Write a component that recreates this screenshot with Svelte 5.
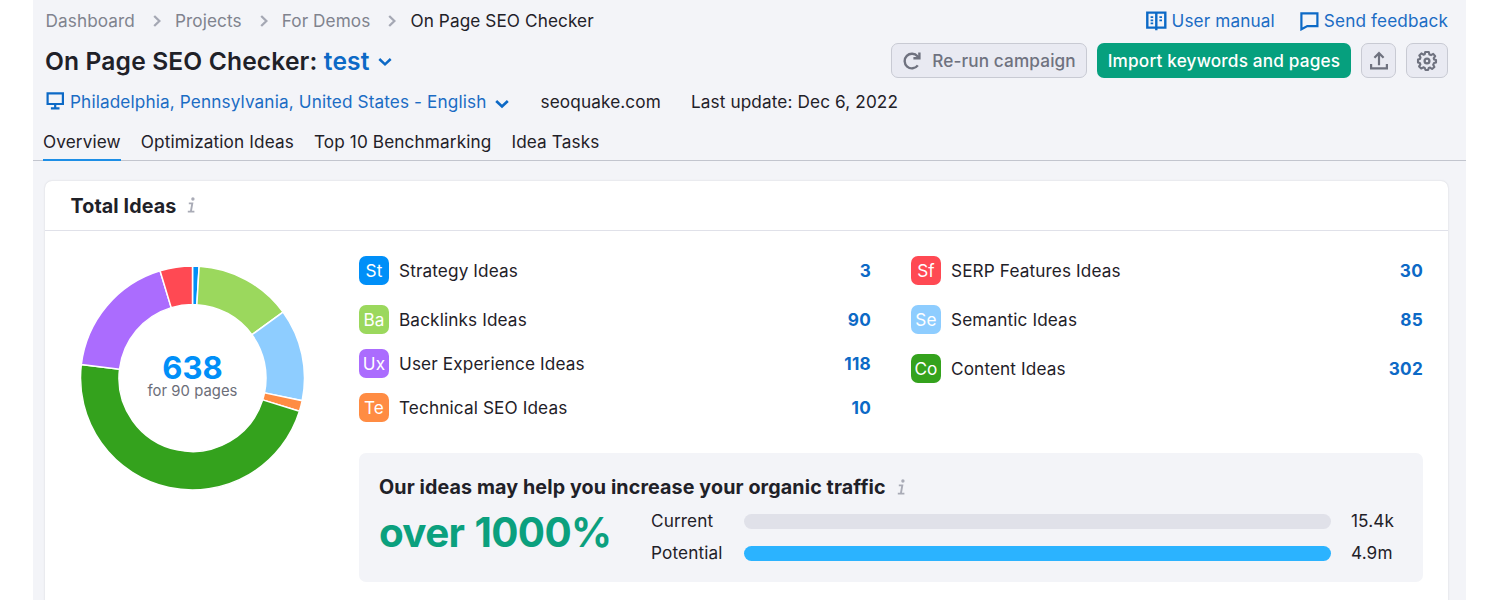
<script>
  // On Page SEO Checker — campaign overview with the Total Ideas widget

  const crumbs = ['Dashboard', 'Projects', 'For Demos'];
  const tabs = ['Overview', 'Optimization Ideas', 'Top 10 Benchmarking', 'Idea Tasks'];
  let activeTab = $state('Overview');

  const ideas = {
    st: { short: 'St', label: 'Strategy Ideas', count: 3, color: '#008ff8' },
    ba: { short: 'Ba', label: 'Backlinks Ideas', count: 90, color: '#9bd85d' },
    ux: { short: 'Ux', label: 'User Experience Ideas', count: 118, color: '#ab6cfe' },
    te: { short: 'Te', label: 'Technical SEO Ideas', count: 10, color: '#ff8c43' },
    sf: { short: 'Sf', label: 'SERP Features Ideas', count: 30, color: '#ff4953' },
    se: { short: 'Se', label: 'Semantic Ideas', count: 85, color: '#8ecdff' },
    co: { short: 'Co', label: 'Content Ideas', count: 302, color: '#34a21d' }
  };
  const columns = [
    [ideas.st, ideas.ba, ideas.ux, ideas.te],
    [ideas.sf, ideas.se, ideas.co]
  ];
  const ring = [ideas.st, ideas.ba, ideas.se, ideas.te, ideas.co, ideas.ux, ideas.sf];
  const total = ring.reduce((sum, item) => sum + item.count, 0);

  const traffic = [
    { label: 'Current', value: '15.4k', width: 100, color: '#e0e1e9' },
    { label: 'Potential', value: '4.9m', width: 100, color: '#2bb3ff' }
  ];

  // Tiny slices get a minimum angle so they stay visible
  const MIN_ANGLE = 3.4;
  const OUTER = 112;
  const INNER = 73.5;

  function point(radius, angle) {
    const rad = (angle * Math.PI) / 180;
    return `${(radius * Math.sin(rad)).toFixed(2)} ${(-radius * Math.cos(rad)).toFixed(2)}`;
  }

  function buildSlices(items) {
    const isSmall = (item) => (item.count / total) * 360 < MIN_ANGLE;
    const small = items.filter(isSmall);
    const rest = total - small.reduce((sum, item) => sum + item.count, 0);
    const free = 360 - small.length * MIN_ANGLE;
    let start = 0;
    return items.map((item) => {
      const end = start + (isSmall(item) ? MIN_ANGLE : (item.count / rest) * free);
      const large = end - start > 180 ? 1 : 0;
      const d = `M${point(OUTER, start)} A${OUTER} ${OUTER} 0 ${large} 1 ${point(OUTER, end)} L${point(INNER, end)} A${INNER} ${INNER} 0 ${large} 0 ${point(INNER, start)}Z`;
      start = end;
      return { d, color: item.color };
    });
  }

  const slices = buildSlices(ring);
</script>

{#snippet info()}
  <svg class="info" width="10" height="17" viewBox="0 0 10 17" fill="none" stroke="#a9abb6" stroke-width="1.9">
    <circle cx="5.9" cy="2" r="1.7" fill="#a9abb6" stroke="none" />
    <path d="M1.8 6.4H5.3L3.9 14.4M0.8 14.6H7.4" />
  </svg>
{/snippet}

<div class="page">
  <header>
    <div class="top-row">
      <nav class="crumbs">
        {#each crumbs as crumb}
          <a href="#top">{crumb}</a>
          <svg width="8" height="12" viewBox="0 0 8 12" fill="none" stroke="#a5a8b4" stroke-width="2.3"><path d="M1.2 1L6.4 6L1.2 11" /></svg>
        {/each}
        <span>On Page SEO Checker</span>
      </nav>
      <div class="help">
        <a href="#top">
          <svg width="21" height="21" viewBox="0 0 21 21" fill="none" stroke="#0c69c6" stroke-width="2.4">
            <path d="M1.3 2.6H19.3V17.6H1.3ZM10.3 2.6V20.2" />
            <path d="M4.6 7.2H7.2M4.6 10.3H7.2M4.6 13.4H7.2M13.4 7.2H16M13.4 10.3H16" stroke-width="1.8" />
          </svg>
          <span>User manual</span>
        </a>
        <a href="#top">
          <svg width="19" height="20" viewBox="0 0 19 20" fill="none" stroke="#0c69c6" stroke-width="2.2">
            <path d="M1.4 2.4H17.4V15.1H7.3L1.4 18.3Z" />
          </svg>
          <span>Send feedback</span>
        </a>
      </div>
    </div>

    <div class="title-row">
      <h1>On Page SEO Checker: <span>test</span>
        <svg width="14" height="10" viewBox="0 0 14 10" fill="none" stroke="#0c69c6" stroke-width="2.5"><path d="M1.3 2L7 7.4L12.7 2" /></svg>
      </h1>
      <div class="actions">
        <button class="rerun">
          <svg width="20" height="20" viewBox="0 0 20 20" fill="none" stroke="#6f727f" stroke-width="2.4">
            <path d="M15.8 14.4A7.3 7.3 0 1 1 15.5 5.3L16.6 6.8" />
            <path d="M17.4 1.6V7.3H11.4" />
          </svg>
          <span>Re-run campaign</span>
        </button>
        <button class="import"><span>Import keywords and pages</span></button>
        <button class="export" aria-label="Export">
          <svg width="20" height="20" viewBox="0 0 20 20" fill="none" stroke="#6f727f" stroke-width="2.2">
            <path d="M2.1 13V17.4H17.9V13M10 14.2V2.6M5.4 6.7L10 2.1L14.6 6.7" />
          </svg>
        </button>
        <button class="settings" aria-label="Settings">
          <svg width="22" height="22" viewBox="0 0 22 22" fill="none" stroke="#6f727f" stroke-width="2.1" stroke-linejoin="round">
            <path d="M9.2 2H12.8L13.4 4.5L15 5.1L17.2 3.8L19.2 6.2L17.7 8.1L18.1 9.4L20 10V12.6L18 13.1L17.2 14.8L18.4 17L16.1 19L14.1 17.6L12.7 18.1L12.1 20H9.5L8.8 18L7.3 17.3L5.2 18.5L3.1 16.4L4.4 14.4L3.8 12.9L2 12.4V9.5L4 8.9L4.5 7.4L3.3 5.5L5.4 3.4L7.4 4.7L8.7 4.2Z" />
            <circle cx="11" cy="11" r="2.4" stroke-width="2.3" />
          </svg>
        </button>
      </div>
    </div>

    <div class="meta-row">
      <svg class="screen" width="19" height="18" viewBox="0 0 19 18" fill="none" stroke="#0c69c6" stroke-width="2.2">
        <path d="M1.6 1.4H16.9V12H1.6Z" />
        <path d="M9.2 12V16M4.9 16.3H13.5" />
      </svg>
      <a href="#top">Philadelphia, Pennsylvania, United States - English</a>
      <svg class="caret" width="14" height="10" viewBox="0 0 14 10" fill="none" stroke="#0c69c6" stroke-width="2.7"><path d="M1.2 2L7 7.4L12.8 2" /></svg>
      <span class="domain">seoquake.com</span>
      <span class="updated">Last update: Dec 6, 2022</span>
    </div>

    <div class="tabs">
      {#each tabs as tab}
        <button class:active={tab === activeTab} onclick={() => (activeTab = tab)}>{tab}</button>
      {/each}
    </div>
  </header>

  <section class="card">
    <div class="card-head">
      <h2>Total Ideas</h2>
      {@render info()}
    </div>
    <div class="card-body">
      <div class="donut">
        <svg width="226" height="226" viewBox="-113.5 -113 226 226">
          {#each slices as slice}
            <path d={slice.d} fill={slice.color} stroke="#fff" stroke-width="1.5" />
          {/each}
        </svg>
        <div class="donut-label">
          <strong>{total}</strong>
          <span>for 90 pages</span>
        </div>
      </div>

      <div class="content">
        <div class="ideas">
          {#each columns as column}
            <ul>
              {#each column as item}
                <li>
                  <span class="badge" style="background: {item.color}">{item.short}</span>
                  <span class="name">{item.label}</span>
                  <a href="#top">{item.count}</a>
                </li>
              {/each}
            </ul>
          {/each}
        </div>

        <div class="traffic">
          <div class="traffic-title">
            <h3>Our ideas may help you increase your organic traffic</h3>
            {@render info()}
          </div>
          <div class="traffic-body">
            <div class="growth">over 1000%</div>
            <div class="bars">
              {#each traffic as row}
                <div class="bar-row">
                  <span class="bar-name">{row.label}</span>
                  <div class="track"><div class="fill" style="width: {row.width}%; background: {row.color}"></div></div>
                  <span class="bar-value">{row.value}</span>
                </div>
              {/each}
            </div>
          </div>
        </div>
      </div>
    </div>
  </section>
</div>

<style>
  :global(body) {
    margin: 0;
    background: #fff;
    overflow: hidden;
  }
  .page {
    box-sizing: border-box;
    width: 1433px;
    height: 600px;
    margin-left: 33px;
    overflow: hidden;
    background: #f3f4f8;
    color: #1f2128;
    font-family: Inter, sans-serif;
    font-size: 17.2px;
    line-height: 24px;
    letter-spacing: 0.12px;
  }
  svg {
    display: block;
    flex: none;
  }
  a {
    color: #1b6cc4;
    text-decoration: none;
  }
  h1, h2, h3, ul {
    margin: 0;
    padding: 0;
  }
  button {
    box-sizing: border-box;
    padding: 0;
    font: inherit;
    color: inherit;
    letter-spacing: inherit;
    cursor: pointer;
  }
  header {
    box-sizing: border-box;
    height: 161px;
    padding-top: 8px;
    border-bottom: 1px solid #c2c5ce;
  }
  .top-row,
  .title-row {
    display: flex;
    justify-content: space-between;
    align-items: center;
    padding: 0 18px 0 12px;
    white-space: nowrap;
  }
  .top-row {
    height: 25px;
  }
  .crumbs {
    display: flex;
    align-items: center;
    gap: 15px;
    padding-left: 0.5px;
    letter-spacing: 0.09px;
  }
  .crumbs a {
    color: #80838e;
  }
  .crumbs svg {
    margin: 1px -1px 0 3px;
  }
  .help {
    display: flex;
    gap: 25px;
  }
  .help a {
    display: flex;
    align-items: center;
    gap: 5px;
  }
  .title-row {
    height: 35px;
    margin-top: 10px;
  }
  h1 {
    display: flex;
    align-items: center;
    font-size: 24.6px;
    font-weight: 600;
    line-height: 32px;
    letter-spacing: 0.14px;
    white-space: pre;
  }
  h1 span {
    color: #0c69c6;
  }
  h1 svg {
    margin: 3px 0 0 8px;
  }
  .actions {
    display: flex;
    gap: 10px;
    font-weight: 500;
  }
  .actions button {
    display: flex;
    align-items: center;
    justify-content: center;
    height: 35px;
    border: 1.5px solid #c8cad3;
    border-radius: 7px;
    background: #e9eaf2;
    color: #6f727f;
  }
  .actions .rerun {
    width: 196px;
    gap: 10px;
  }
  .actions .import {
    width: 254px;
    border: none;
    background: #06a07e;
    color: #fff;
    letter-spacing: 0.17px;
  }
  .actions .export {
    width: 35px;
  }
  .actions .settings {
    width: 42px;
  }
  .meta-row {
    display: flex;
    align-items: center;
    height: 24px;
    margin-top: 12px;
    padding-left: 13px;
    white-space: nowrap;
  }
  .screen {
    margin-top: -2px;
  }
  .meta-row a {
    margin-left: 5px;
  }
  .caret {
    margin: 4px 0 0 8px;
  }
  .domain {
    margin-left: 32px;
  }
  .updated {
    margin-left: 30px;
  }
  .tabs {
    display: flex;
    gap: 20px;
    margin-top: 16px;
    padding-left: 10px;
  }
  .tabs button {
    height: 31px;
    padding-bottom: 6px;
    border: none;
    border-bottom: 2.5px solid transparent;
    background: none;
    white-space: nowrap;
  }
  .tabs .active {
    border-color: #1d8ee6;
  }
  .card {
    box-sizing: border-box;
    width: 1403px;
    height: 440px;
    margin: 20px 0 0 12px;
    border-radius: 7px 7px 0 0;
    background: #fff;
    box-shadow: 0 0 2px rgb(25 27 35 / 0.16);
  }
  .card-head {
    display: flex;
    align-items: center;
    gap: 11px;
    box-sizing: border-box;
    height: 50px;
    padding-left: 25.5px;
    border-bottom: 1px solid #e0e1e9;
  }
  h2, h3 {
    font-size: 19.7px;
    font-weight: 700;
    line-height: 26px;
    letter-spacing: 0.11px;
    white-space: nowrap;
  }
  .card-body {
    display: flex;
    padding: 25px 25px 0 34px;
  }
  .donut {
    display: grid;
    width: 226px;
    height: 226px;
    margin-top: 9px;
  }
  .donut > * {
    grid-area: 1 / 1;
  }
  .donut-label {
    display: flex;
    flex-direction: column;
    align-items: center;
    padding: 87px 0 0 1px;
  }
  .donut-label strong {
    font-size: 31px;
    line-height: 31px;
    color: #008ff8;
  }
  .donut-label span {
    font-size: 14.8px;
    line-height: 16px;
    letter-spacing: 0.05px;
    color: #6c6e79;
  }
  .content {
    flex: 1;
    margin-left: 54px;
  }
  .ideas {
    display: grid;
    grid-template-columns: 512px 512px;
    column-gap: 40px;
    height: 197px;
  }
  ul {
    list-style: none;
  }
  li {
    display: flex;
    align-items: center;
    height: 29px;
    margin-bottom: 20px;
  }
  ul:first-child li:nth-child(n + 2) {
    margin-bottom: 15px;
  }
  .badge {
    width: 30px;
    border-radius: 7px;
    color: #fff;
    line-height: 29px;
    text-align: center;
  }
  .name {
    flex: 1;
    margin-left: 10px;
  }
  li a {
    font-weight: 700;
    letter-spacing: 0.25px;
    color: #0c69c6;
  }
  .traffic {
    box-sizing: border-box;
    height: 129px;
    padding: 21px 20px 0;
    border-radius: 7px;
    background: #f3f4f8;
  }
  .traffic-title {
    display: flex;
    align-items: center;
    gap: 11px;
  }
  .traffic-body {
    display: flex;
  }
  .growth {
    width: 272px;
    padding-top: 9px;
    font-size: 40.4px;
    font-weight: 700;
    line-height: 48px;
    letter-spacing: -0.7px;
    word-spacing: 1.5px;
    color: #0ba07e;
    white-space: nowrap;
  }
  .bars {
    flex: 1;
    padding-top: 9px;
  }
  .bar-row {
    display: flex;
    align-items: center;
    height: 24px;
    margin-bottom: 8px;
  }
  .bar-name {
    width: 93px;
  }
  .track {
    flex: 1;
    height: 15px;
  }
  .fill {
    height: 15px;
    border-radius: 8px;
  }
  .bar-value {
    width: 52px;
    margin-left: 20px;
  }
</style>
